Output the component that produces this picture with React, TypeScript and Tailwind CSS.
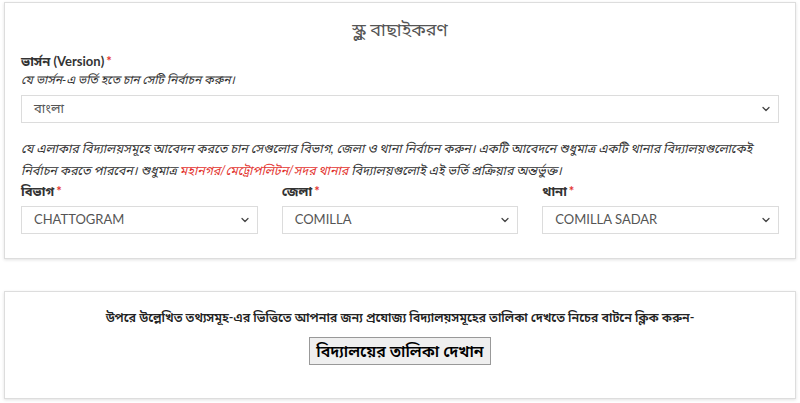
import { ChevronDown } from 'lucide-react'

const bn = { fontFamily: '"Lato", "Noto Sans Bengali", "Lohit Bengali", "Noto Sans", sans-serif' }

function Select({ value }: { value: string }) {
  return (
    <div className="flex h-[28px] items-center justify-between border border-[#dcdcdc] bg-white pl-3 pr-1.5 text-[13px] text-[#555]">
      <span>{value}</span>
      <ChevronDown className="h-3 w-3 text-[#444]" strokeWidth={2.5} />
    </div>
  )
}

function Label({ text }: { text: string }) {
  return (
    <div className="text-[13px] font-bold leading-[18px] text-[#333]">
      {text}
      <span className="ml-0.5 text-[#e3342f]">*</span>
    </div>
  )
}

export default function App() {
  return (
    <div className="min-h-[403px] bg-white px-1 pt-0.5" style={bn}>
      {/* School selection card */}
      <div className="border border-[#dddddd] bg-white px-4 pb-6 pt-[14px] shadow-[0_1px_3px_rgba(0,0,0,0.12)]">
        <h2 className="text-center text-[18px] leading-[24px] text-[#555]">স্কুল বাছাইকরণ</h2>

        <div className="mt-[11px]">
          <Label text="ভার্সন (Version)" />
          <p className="mt-[1px] text-[12px] italic leading-[18px] text-[#333]">যে ভার্সন-এ ভর্তি হতে চান সেটি নির্বাচন করুন।</p>
          <div className="mt-[6px]">
            <Select value="বাংলা" />
          </div>
        </div>

        <p className="mt-[15px] text-[12.5px] italic leading-[22px] text-[#333]">
          যে এলাকার বিদ্যালয়সমূহে আবেদন করতে চান সেগুলোর বিভাগ, জেলা ও থানা নির্বাচন করুন। একটি আবেদনে শুধুমাত্র একটি থানার বিদ্যালয়গুলোকেই নির্বাচন করতে পারবেন। শুধুমাত্র{' '}
          <span className="text-[#e3342f]">মহানগর/মেট্রোপলিটন/সদর থানার</span> বিদ্যালয়গুলোই এই ভর্তি প্রক্রিয়ার অন্তর্ভুক্ত।
        </p>

        <div className="grid grid-cols-3 gap-6">
          <div>
            <Label text="বিভাগ" />
            <div className="mt-[6px]">
              <Select value="CHATTOGRAM" />
            </div>
          </div>
          <div>
            <Label text="জেলা" />
            <div className="mt-[6px]">
              <Select value="COMILLA" />
            </div>
          </div>
          <div>
            <Label text="থানা" />
            <div className="mt-[6px]">
              <Select value="COMILLA SADAR" />
            </div>
          </div>
        </div>
      </div>

      {/* Action card */}
      <div className="mt-8 flex h-[108px] flex-col items-center border border-[#dddddd] bg-white pt-[16px] shadow-[0_1px_3px_rgba(0,0,0,0.12)]">
        <p className="text-[12.5px] font-semibold leading-[20px] text-[#222]">
          উপরে উল্লেখিত তথ্যসমূহ-এর ভিত্তিতে আপনার জন্য প্রযোজ্য বিদ্যালয়সমূহের তালিকা দেখতে নিচের বাটনে ক্লিক করুন-
        </p>
        <button className="mt-[9px] h-[28px] border border-[#999] bg-[#efefef] px-[6px] text-[16px] font-semibold text-black">
          বিদ্যালয়ের তালিকা দেখান
        </button>
      </div>
    </div>
  )
}
